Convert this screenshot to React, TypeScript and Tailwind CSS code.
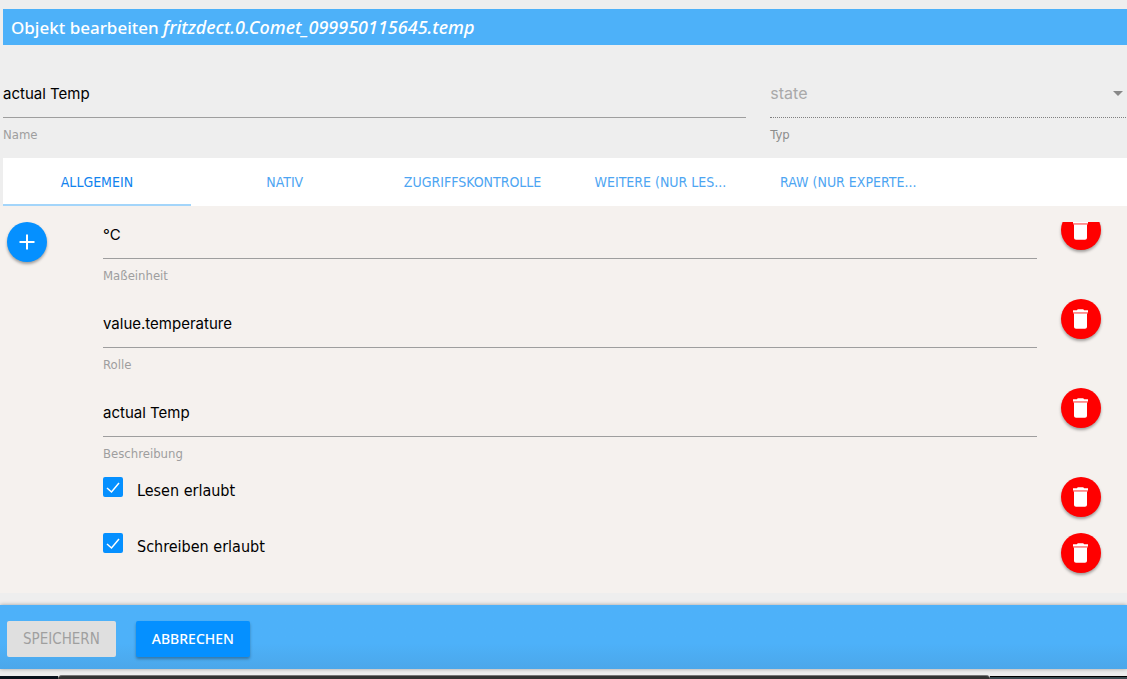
import React, { useState } from 'react';

type TextField = { id: string; label: string; value: string };
type CheckField = { id: string; label: string; checked: boolean };

const tabs = ['Allgemein', 'Nativ', 'Zugriffskontrolle', 'Weitere (nur Les...', 'Raw (nur Experte...'];

const initialTexts: TextField[] = [
  { id: 'unit', label: 'Maßeinheit', value: '°C' },
  { id: 'role', label: 'Rolle', value: 'value.temperature' },
  { id: 'desc', label: 'Beschreibung', value: 'actual Temp' },
];

const initialChecks: CheckField[] = [
  { id: 'read', label: 'Lesen erlaubt', checked: true },
  { id: 'write', label: 'Schreiben erlaubt', checked: true },
];

const DeleteButton: React.FC<{ label: string; onClick: () => void }> = ({ label, onClick }) => (
  <button
    type="button"
    aria-label={`${label} löschen`}
    onClick={onClick}
    className="flex h-10 w-10 shrink-0 items-center justify-center rounded-full bg-[#ff0000] text-white shadow-[0_2px_3px_rgba(0,0,0,0.35)]"
  >
    <svg width="24" height="24" viewBox="0 0 24 24" fill="currentColor" aria-hidden="true">
      <path d="M5 6.5h13v13.2c0 1.1-.9 2-2 2H7c-1.1 0-2-.9-2-2z" />
      <path d="M4 3.2h3.8l1-1h5.4l1 1H19v2H4z" />
      <path d="M4 5.2h15v1.3H4z" opacity=".5" />
    </svg>
  </button>
);

const App: React.FC = () => {
  const [name, setName] = useState('actual Temp');
  const [activeTab, setActiveTab] = useState(0);
  const [texts, setTexts] = useState(initialTexts);
  const [checks, setChecks] = useState(initialChecks);

  return (
    <div className="flex min-h-screen flex-col overflow-x-hidden bg-[#eeeeee] font-['DejaVu_Sans_Condensed','Noto_Sans',sans-serif] text-black">
      <header className="mt-[9px] ml-[3px] flex h-9 items-center bg-[#4db1f9] px-2 text-white">
        <h1 className="font-['Noto_Sans',sans-serif] text-[17px] leading-7 font-medium whitespace-nowrap">
          Objekt bearbeiten <i className="text-lg leading-7">fritzdect.0.Comet_099950115645.temp</i>
        </h1>
      </header>

      <div className="mt-6 -mr-[3px] ml-[3px] grid h-[89px] grid-cols-3 gap-x-6">
        <div className="col-span-2 flex flex-col">
          <input
            id="name"
            value={name}
            onChange={e => setName(e.target.value)}
            className="h-[49px] w-full border-b border-[#9e9e9e] bg-transparent font-[Inter,sans-serif] text-[15px] outline-none"
          />
          <label htmlFor="name" className="mt-2 text-[13px] leading-[18px] text-[#9e9e9e]">Name</label>
        </div>
        <div className="flex flex-col">
          <div className="flex h-[49px] items-center border-b border-dotted border-[#808080]">
            <select
              id="typ"
              disabled
              className="h-full min-w-0 flex-1 appearance-none bg-transparent font-[Inter,sans-serif] text-base text-[#a9a9a9] opacity-100 outline-none"
            >
              <option>state</option>
            </select>
            <svg width="10" height="5" viewBox="0 0 10 5" className="mr-[7px] fill-[#888888]" aria-hidden="true">
              <path d="M0 0h10L5 5z" />
            </svg>
          </div>
          <label htmlFor="typ" className="mt-2 text-[13px] leading-[18px] text-[#8c8c8c]">Typ</label>
        </div>
      </div>

      <nav className="-mr-[3px] ml-[3px] grid h-12 grid-cols-6 bg-white" role="tablist">
        {tabs.map((tab, i) => (
          <button
            key={tab}
            type="button"
            role="tab"
            aria-selected={activeTab === i}
            onClick={() => setActiveTab(i)}
            className={`truncate border-b-2 px-6 pt-[2px] text-sm uppercase ${
              activeTab === i ? 'border-[#a3d5fa] text-[#1183ee]' : 'border-transparent text-[#4da5f2]'
            }`}
          >
            {tab}
          </button>
        ))}
      </nav>

      <main className="flex flex-1 items-start bg-[#f5f1ee] pt-4 pl-[7px]">
        <button
          type="button"
          aria-label="Attribut hinzufügen"
          className="flex h-10 w-10 shrink-0 items-center justify-center rounded-full bg-[#0590ff] text-white shadow-[0_2px_3px_rgba(0,0,0,0.35)]"
        >
          <svg width="24" height="24" viewBox="0 0 24 24" stroke="currentColor" strokeWidth="2" aria-hidden="true">
            <path d="M12 4.5v15M4.5 12h15" />
          </svg>
        </button>

        {/* scrolled list, the first row is cut off at the top */}
        <div className="ml-14 min-w-0 flex-1 overflow-hidden pr-[26px] pb-1">
          <div className="-mt-3">
            {texts.map(field => (
              <div key={field.id} className="flex h-[89px] items-start gap-6">
                <div className="flex min-w-0 flex-1 flex-col">
                  <input
                    id={field.id}
                    value={field.value}
                    onChange={e => setTexts(texts.map(t => (t.id === field.id ? { ...t, value: e.target.value } : t)))}
                    className="h-[49px] w-full border-b border-[#9e9e9e] bg-transparent font-[Inter,sans-serif] text-[15px] outline-none"
                  />
                  <label htmlFor={field.id} className="mt-2 text-[13px] leading-[18px] text-[#9e9e9e]">{field.label}</label>
                </div>
                <DeleteButton label={field.label} onClick={() => setTexts(texts.filter(t => t.id !== field.id))} />
              </div>
            ))}
            {checks.map(field => (
              <div key={field.id} className="flex h-14 items-start justify-between">
                <label className="flex items-start">
                  <span className="grid">
                    <input
                      type="checkbox"
                      checked={field.checked}
                      onChange={() => setChecks(checks.map(c => (c.id === field.id ? { ...c, checked: !c.checked } : c)))}
                      className="peer col-start-1 row-start-1 h-5 w-5 appearance-none rounded-[2px] border-2 border-[#5a5a5a] checked:border-[#0590ff] checked:bg-[#0590ff]"
                    />
                    <svg
                      width="20"
                      height="20"
                      viewBox="0 0 20 20"
                      className="pointer-events-none invisible col-start-1 row-start-1 fill-none stroke-white stroke-[1.5] peer-checked:visible"
                      aria-hidden="true"
                    >
                      <path d="M4 11l4.5 4L16 6" />
                    </svg>
                  </span>
                  <span className="ml-[14px] pt-[2px] text-base">{field.label}</span>
                </label>
                <DeleteButton label={field.label} onClick={() => setChecks(checks.filter(c => c.id !== field.id))} />
              </div>
            ))}
          </div>
        </div>
      </main>

      <footer className="mt-3 flex h-16 shrink-0 items-center gap-5 bg-linear-to-b from-[#4db1f9] from-60% to-[#4ba7ea] px-[7px] pt-1 shadow-[0_0_4px_rgba(0,0,0,0.35)]">
        <button type="button" disabled className="h-9 rounded-[2px] bg-[#dfdfdf] px-4 text-[15px] text-[#9f9f9f] uppercase">
          Speichern
        </button>
        <button
          type="button"
          className="h-9 rounded-[2px] bg-[#0590ff] px-4 font-['Noto_Sans',sans-serif] text-sm font-medium text-white uppercase shadow-[0_2px_3px_rgba(0,0,0,0.3)]"
        >
          Abbrechen
        </button>
      </footer>
      {/* edge of the window behind the dialog */}
      <div className="mt-[6px] flex h-1 items-end bg-[#eeeeee]" aria-hidden="true">
        <div className="h-[3px] w-[58px] bg-[#0a121c]" />
        <div className="h-1 flex-1 rounded-t-sm border-t border-[#777777] bg-[#333333]" />
        <div className="h-[3px] w-[137px] border-t border-black bg-[#3b4a50]" />
      </div>
    </div>
  );
};

export default App;
